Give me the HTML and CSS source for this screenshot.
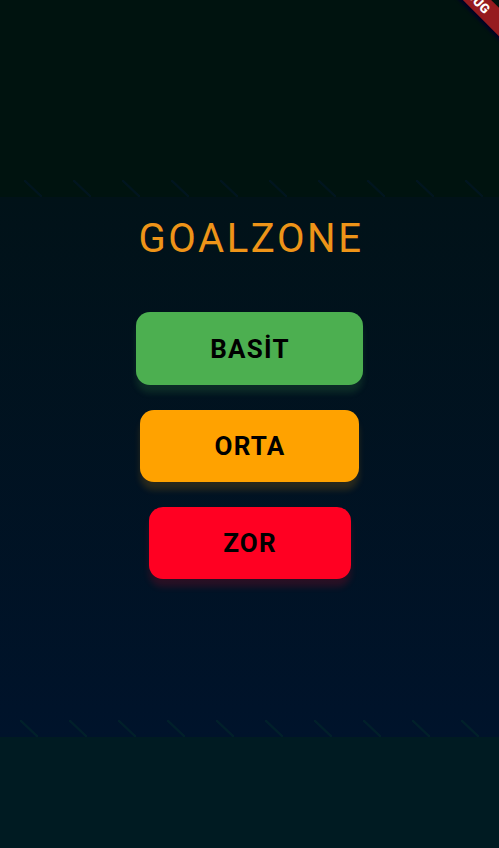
FILE: index.html
```html
<!DOCTYPE html>
<html lang="tr">
<head>
<meta charset="utf-8">
<title>GOALZONE</title>
<link rel="stylesheet" href="styles.css">
</head>
<body>
<div class="screen">
  <div class="top">
    <div class="stripes stripes-top">
      <span></span><span></span><span></span><span></span><span></span>
      <span></span><span></span><span></span><span></span><span></span>
    </div>
  </div>
  <div class="main">
    <h1 class="title">GOALZONE</h1>
    <div class="menu">
      <button class="btn btn-easy">BASİT</button>
      <button class="btn btn-mid">ORTA</button>
      <button class="btn btn-hard">ZOR</button>
    </div>
    <div class="stripes stripes-bottom">
      <span></span><span></span><span></span><span></span><span></span>
      <span></span><span></span><span></span><span></span><span></span>
    </div>
  </div>
  <div class="bottom"></div>
  <div class="debug-banner"><span>DEBUG</span></div>
</div>
</body>
</html>
```
FILE: styles.css
```css
html, body {
  margin: 0;
  padding: 0;
  background: #001a22;
}
.screen {
  position: relative;
  width: 499px;
  height: 848px;
  overflow: hidden;
  display: flex;
  flex-direction: column;
  font-family: Roboto, "Liberation Sans", sans-serif;
}
.top {
  height: 197px;
  background: #00130f;
  display: flex;
  flex-direction: column;
  justify-content: flex-end;
}
.main {
  height: 540px;
  background: linear-gradient(#011218, #00132b);
  display: flex;
  flex-direction: column;
  align-items: center;
}
.bottom {
  flex: 1;
  background: #001b22;
}
.stripes {
  display: flex;
  gap: 31px;
  height: 17px;
  width: 100%;
  box-sizing: border-box;
}
.stripes span {
  width: 18px;
  height: 17px;
  flex: none;
}
.stripes-top {
  padding-left: 24px;
}
.stripes-top span {
  background: linear-gradient(to bottom left, transparent 44%, #01151f 47%, #01151f 53%, transparent 56%);
}
.stripes-bottom {
  margin-top: auto;
  padding-left: 20px;
}
.stripes-bottom span {
  background: linear-gradient(to bottom left, transparent 44%, #01202a 47%, #01202a 53%, transparent 56%);
}
.title {
  margin: 22px 0 0;
  font-size: 40px;
  line-height: 40px;
  font-weight: 400;
  letter-spacing: 2.6px;
  color: #ee9418;
  padding-left: 3px;
}
.menu {
  margin-top: 53px;
  display: flex;
  flex-direction: column;
  align-items: center;
  gap: 25px;
}
.btn {
  border: none;
  border-radius: 14px;
  height: 72px;
  font-family: Roboto, "Liberation Sans", sans-serif;
  font-size: 26px;
  font-weight: 700;
  letter-spacing: 1.2px;
  color: #000;
  padding: 0 0 0 1px;
}
.btn-easy {
  width: 227px;
  height: 73px;
  background: #4caf50;
  box-shadow: 0 8px 6px rgba(76, 175, 80, 0.16);
}
.btn-mid {
  width: 219px;
  background: #ffa200;
  box-shadow: 0 8px 6px rgba(255, 162, 0, 0.16);
}
.btn-hard {
  width: 202px;
  background: #ff0022;
  box-shadow: 0 8px 6px rgba(255, 0, 34, 0.16);
}
.debug-banner {
  position: absolute;
  left: 413px;
  top: -14px;
  width: 120px;
  height: 20px;
  background: #961b1f;
  transform: rotate(45deg);
  box-shadow: 0 3px 3px rgba(0, 0, 40, 0.85);
  display: flex;
  align-items: center;
  justify-content: center;
}
.debug-banner span {
  color: #fff;
  font-size: 13px;
  font-weight: 900;
  line-height: 1;
  letter-spacing: 0.3px;
}
```
